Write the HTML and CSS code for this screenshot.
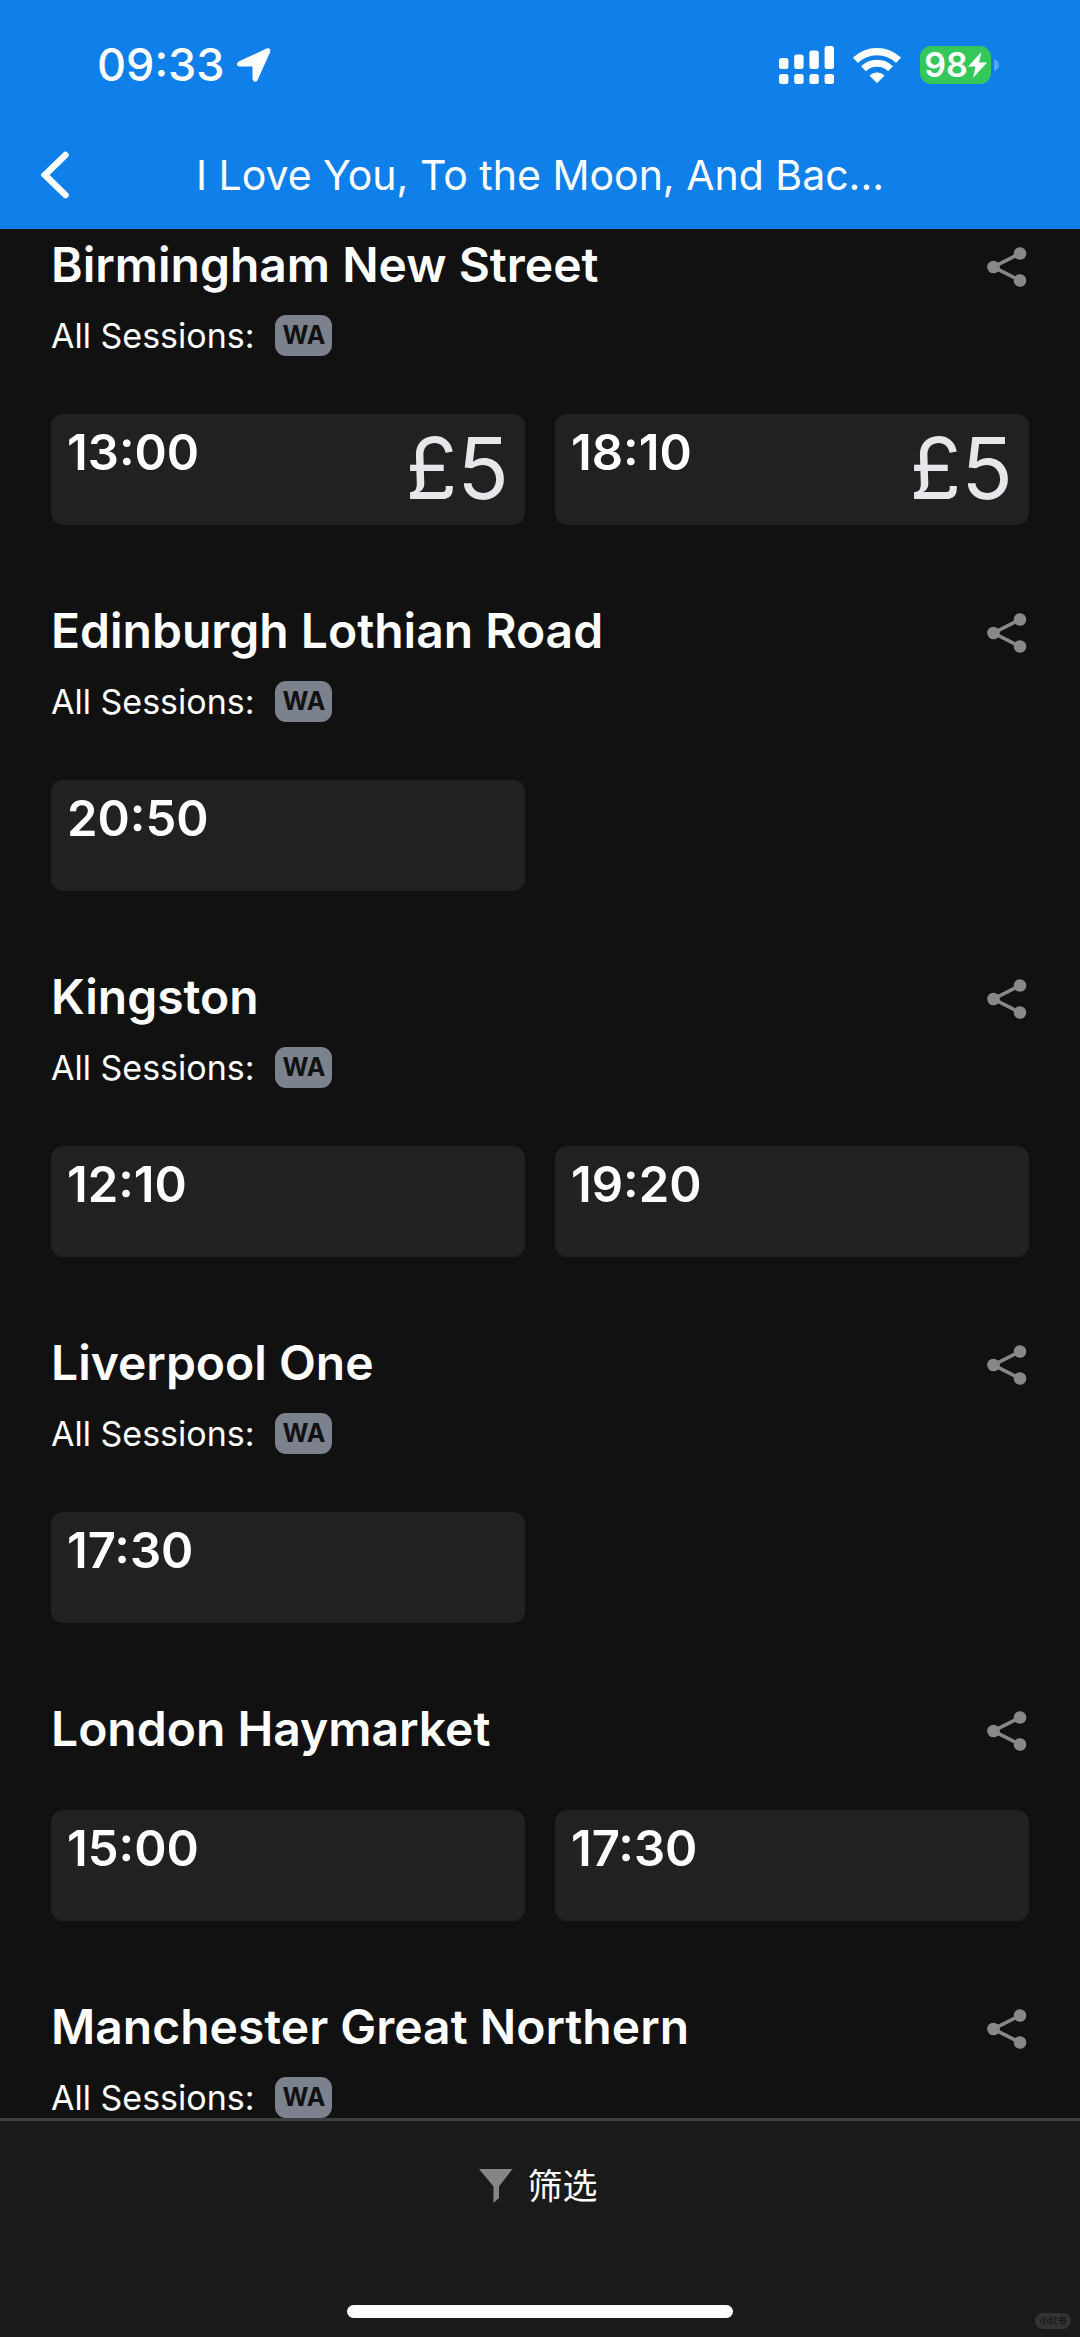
FILE: index.html
```html
<!DOCTYPE html>
<html lang="en">
<head>
<meta charset="utf-8">
<meta name="viewport" content="width=device-width, initial-scale=1">
<title>Showtimes</title>
<link rel="stylesheet" href="styles.css">
</head>
<body>
<svg class="sprite" aria-hidden="true">
  <symbol id="share" viewBox="0 0 40 40">
    <path d="M33 6.500 6.500 20 33 33.500" fill="none" stroke="currentColor" stroke-width="3.600"/>
    <circle cx="33" cy="6.500" r="6.300"/><circle cx="6.500" cy="20" r="6.300"/><circle cx="33" cy="33.500" r="6.300"/>
  </symbol>
</svg>
<header class="top">
  <div class="status">
    <span class="clock">09:33</span>
    <svg class="location" viewBox="0 0 36 36" aria-hidden="true"><path d="M3 15.500 31 2.500Q34 1.500 33 5L20.500 33Q18.500 35 17.500 32V20Q17.500 18.500 16 18.500H3.500Q.500 17.500 3 15.500Z" fill="#fff" stroke="#fff" stroke-width="2" stroke-linejoin="round"/></svg>
    <span class="indicators">
      <svg class="signal" viewBox="0 0 56 38" aria-hidden="true" fill="#fff">
        <rect x="0" y="12" width="9.400" height="11" rx="2.500"/><rect x="15.200" y="8.500" width="9.400" height="14.500" rx="2.500"/><rect x="30.400" y="4.500" width="9.400" height="18.500" rx="2.500"/><rect x="45.600" y="0" width="9.400" height="23" rx="2.500"/>
        <rect x="0" y="28" width="9.400" height="10" rx="2.500"/><rect x="15.200" y="28" width="9.400" height="10" rx="2.500"/><rect x="30.400" y="28" width="9.400" height="10" rx="2.500"/><rect x="45.600" y="28" width="9.400" height="10" rx="2.500"/>
      </svg>
      <svg class="wifi" viewBox="0 0 48 36" aria-hidden="true">
        <path d="M2.500 13.300A31 31 0 0 1 45.500 13.300" fill="none" stroke="#fff" stroke-width="7.400"/>
        <path d="M10.500 21.800A19.500 19.500 0 0 1 37.500 21.800" fill="none" stroke="#fff" stroke-width="7"/>
        <path d="M17 28.600A10.500 10.500 0 0 1 31 28.600L24 35.600Z" fill="#fff" stroke="#fff" stroke-width="1" stroke-linejoin="round"/>
      </svg>
      <span class="battery"><span class="level">98<svg class="bolt" viewBox="0 0 19 26" aria-hidden="true"><path d="M13.500 0 0 14.500H7.500L5 26 19 10.500H11Z" fill="#fff"/></svg></span><svg class="nub" viewBox="0 0 5 12" aria-hidden="true"><path d="M0 0Q5 2 5 6T0 12Z" fill="#fff" opacity=".3"/></svg></span>
    </span>
  </div>
  <div class="nav">
    <button class="back" type="button" aria-label="Back"><svg viewBox="0 0 28 48"><path d="M24.500 4 4 24 24.500 44" fill="none" stroke="#fff" stroke-width="6.500" stroke-linecap="round" stroke-linejoin="miter"/></svg></button>
    <h1>I Love You, To the Moon, And Bac...</h1>
  </div>
</header>
<main class="list">
  <section class="cinema">
    <div class="head"><h2>Birmingham New Street</h2><button class="share" type="button" aria-label="Share"><svg><use href="#share"/></svg></button></div>
    <p class="sessions">All Sessions: <span class="tag">WA</span></p>
    <div class="times"><a class="time" href="#">13:00<span class="price">£5</span></a><a class="time" href="#">18:10<span class="price">£5</span></a></div>
  </section>
  <section class="cinema">
    <div class="head"><h2>Edinburgh Lothian Road</h2><button class="share" type="button" aria-label="Share"><svg><use href="#share"/></svg></button></div>
    <p class="sessions">All Sessions: <span class="tag">WA</span></p>
    <div class="times"><a class="time" href="#">20:50</a></div>
  </section>
  <section class="cinema">
    <div class="head"><h2>Kingston</h2><button class="share" type="button" aria-label="Share"><svg><use href="#share"/></svg></button></div>
    <p class="sessions">All Sessions: <span class="tag">WA</span></p>
    <div class="times"><a class="time" href="#">12:10</a><a class="time" href="#">19:20</a></div>
  </section>
  <section class="cinema">
    <div class="head"><h2>Liverpool One</h2><button class="share" type="button" aria-label="Share"><svg><use href="#share"/></svg></button></div>
    <p class="sessions">All Sessions: <span class="tag">WA</span></p>
    <div class="times"><a class="time" href="#">17:30</a></div>
  </section>
  <section class="cinema">
    <div class="head"><h2>London Haymarket</h2><button class="share" type="button" aria-label="Share"><svg><use href="#share"/></svg></button></div>
    <div class="times"><a class="time" href="#">15:00</a><a class="time" href="#">17:30</a></div>
  </section>
  <section class="cinema">
    <div class="head"><h2>Manchester Great Northern</h2><button class="share" type="button" aria-label="Share"><svg><use href="#share"/></svg></button></div>
    <p class="sessions">All Sessions: <span class="tag">WA</span></p>
  </section>
</main>
<footer class="bottom">
  <button class="filter" type="button"><svg viewBox="0 0 34 34" aria-hidden="true"><path d="M0 0H33.500L20 17.500V29L14.500 34V17.500Z" fill="#868686"/></svg><span lang="zh">筛选</span></button>
  <div class="home"></div>
  <span class="mark" lang="zh">小红书</span>
</footer>
</body>
</html>
```
FILE: styles.css
```css
* { box-sizing: border-box; }
body {
  margin: 0;
  min-height: 100vh;
  display: flex;
  flex-direction: column;
  background: #111;
  color: #fff;
  font-family: Inter, "Noto Sans CJK SC", sans-serif;
}
h1, h2, p { margin: 0; }
button { border: 0; padding: 0; background: none; color: inherit; font: inherit; }
svg { display: block; flex: none; }
.sprite { position: absolute; width: 0; height: 0; }

.top { background: #0f80e9; position: sticky; top: 0; z-index: 1; }
.status { display: flex; align-items: center; height: 130px; padding: 0 81px 0 97px; }
.clock { font-size: 45px; line-height: 60px; font-weight: 500; }
.location { width: 36px; height: 36px; margin-left: 12px; }
.indicators { display: flex; align-items: center; margin-left: auto; }
.signal { width: 56px; height: 38px; }
.wifi { width: 48px; height: 36px; margin-left: 18px; }
.battery { display: flex; align-items: center; gap: 3px; margin-left: 19px; }
.level {
  display: flex; align-items: center; justify-content: center;
  width: 71px; height: 38px; border-radius: 11px;
  background: #34c759; font-size: 34px; line-height: 38px; font-weight: 600;
}
.bolt { width: 19px; height: 26px; }
.nub { width: 5px; height: 12px; }
.nav { display: grid; grid-template-columns: 70px 1fr 70px; align-items: center; height: 99px; padding: 0 41px 9px; }
.back { width: 28px; height: 48px; }
.back svg { width: 28px; height: 48px; }
h1 { font-size: 41px; line-height: 60px; font-weight: 400; text-align: center; white-space: nowrap; }

.list { flex: 1; padding: 6px 51px 0; }
.cinema + .cinema { margin-top: 76px; }
.head { display: flex; align-items: center; justify-content: space-between; height: 60px; }
h2 { font-size: 48px; line-height: 60px; font-weight: 600; white-space: nowrap; }
.share { color: #888; margin-right: 2px; padding-top: 4px; }
.share svg { width: 40px; height: 40px; fill: currentColor; }
.sessions { display: flex; align-items: center; height: 41px; margin-top: 20px; font-size: 34px; line-height: 41px; }
.tag {
  width: 57px; margin-left: 21px; border-radius: 11px; background: #7b828d; color: #111;
  font-size: 25px; line-height: 41px; font-weight: 700; text-align: center;
}
.times { display: grid; grid-template-columns: 1fr 1fr; gap: 30px; margin-top: 51px; }
.sessions + .times { margin-top: 58px; }
.time {
  display: flex; justify-content: space-between; height: 111px; padding: 9px 16px;
  border-radius: 12px; background: #212121; color: #fff; text-decoration: none;
  font-size: 49px; line-height: 60px; font-weight: 600;
}
.price { font-size: 85px; line-height: 92px; font-weight: 375; color: #e5e7ea; }

.bottom {
  position: sticky; bottom: 0; display: flex; flex-direction: column; align-items: center;
  justify-content: space-between; height: 220px; padding: 43px 0 20px;
  border-top: 3px solid #3f4041; background: #1a1a1a;
}
.filter { display: flex; align-items: center; gap: 14px; font-size: 35px; line-height: 44px; padding-right: 3px; }
.filter svg { width: 34px; height: 34px; }
.home { width: 386px; height: 13px; border-radius: 7px; background: #fff; }
.mark {
  position: absolute; right: 9px; bottom: 9px; width: 36px; border-radius: 8px;
  background: #333; color: #181818; font-size: 9px; line-height: 16px; font-weight: 700; text-align: center;
}
```
